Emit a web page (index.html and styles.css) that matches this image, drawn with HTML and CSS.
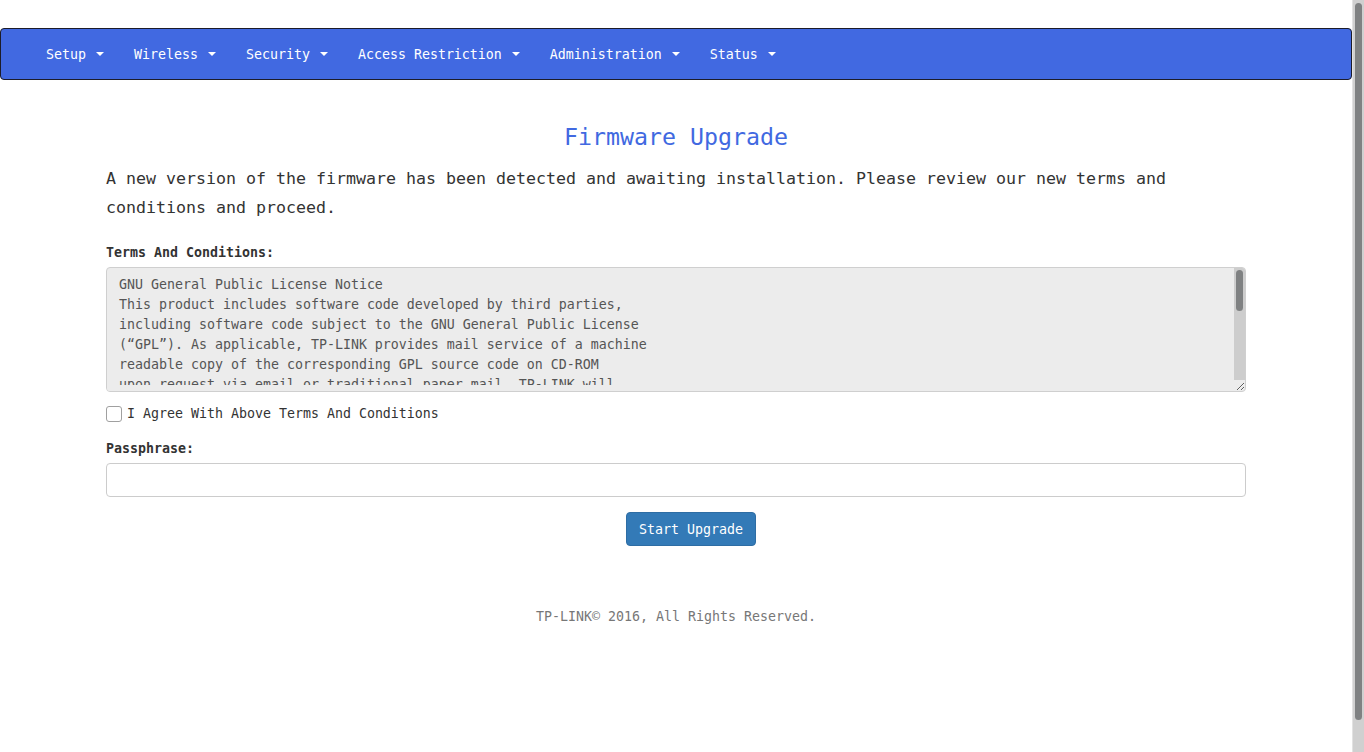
FILE: index.html
```html
<!DOCTYPE html>
<html lang="en">
<head>
<meta charset="utf-8">
<title>Firmware Upgrade</title>
<link rel="stylesheet" href="styles.css">
</head>
<body>
<div class="page">
  <nav class="navbar">
    <a class="nav-link" href="#">Setup<span class="caret"></span></a>
    <a class="nav-link" href="#">Wireless<span class="caret"></span></a>
    <a class="nav-link" href="#">Security<span class="caret"></span></a>
    <a class="nav-link" href="#">Access Restriction<span class="caret"></span></a>
    <a class="nav-link" href="#">Administration<span class="caret"></span></a>
    <a class="nav-link" href="#">Status<span class="caret"></span></a>
  </nav>
  <main class="container">
    <h1 class="title">Firmware Upgrade</h1>
    <p class="intro">A new version of the firmware has been detected and awaiting installation. Please review our new terms and conditions and proceed.</p>
    <label class="field-label" for="terms">Terms And Conditions:</label>
    <div class="terms-wrap">
      <textarea id="terms" class="terms" readonly>GNU General Public License Notice
This product includes software code developed by third parties,
including software code subject to the GNU General Public License
(“GPL”). As applicable, TP-LINK provides mail service of a machine
readable copy of the corresponding GPL source code on CD-ROM
upon request via email or traditional paper mail. TP-LINK will
charge only the cost of media, shipping, and handling, upon
receipt of a valid request. This offer is valid for three years
from the date of distribution of this product.
The GPL code used in this product is distributed WITHOUT ANY
WARRANTY and is subject to the copyrights of one or more authors.
For details, see the GPL code in this product and the terms of
the GPL. Any further distribution must comply with the license.
By proceeding you agree that the updated firmware will be
installed on this device and that the device will restart.</textarea>
      <div class="ta-clip"></div>
      <div class="ta-scroll"><div class="ta-thumb"></div></div>
    </div>
    <div class="agree">
      <input type="checkbox" id="agree" class="check">
      <label for="agree" class="agree-label">I Agree With Above Terms And Conditions</label>
    </div>
    <label class="field-label pass-label" for="pass">Passphrase:</label>
    <input type="password" id="pass" class="text-input">
    <div class="actions">
      <button type="button" class="btn">Start Upgrade</button>
    </div>
    <footer class="footer">TP-LINK© 2016, All Rights Reserved.</footer>
  </main>
</div>
<div class="page-scroll"><div class="page-thumb"></div></div>
</body>
</html>
```
FILE: styles.css
```css
html, body {
  margin: 0;
  padding: 0;
  overflow: hidden;
}
body {
  font-family: "DejaVu Sans Mono", "Liberation Mono", monospace;
  font-size: 13.29px;
  line-height: 20px;
  color: #333;
  background: #fff;
}
.page {
  width: 1352px;
  height: 752px;
  padding-top: 28px;
  box-sizing: border-box;
}
.navbar {
  display: flex;
  align-items: center;
  height: 52px;
  box-sizing: border-box;
  padding-left: 45px;
  padding-top: 2px;
  background: #4169e1;
  border: 1px solid #1c1c2a;
  border-radius: 4px;
}
.nav-link {
  display: inline-flex;
  align-items: center;
  color: #fff;
  text-decoration: none;
  margin-right: 30px;
  line-height: 20px;
}
.caret {
  display: inline-block;
  width: 0;
  height: 0;
  margin-left: 10px;
  margin-top: -3px;
  border-top: 4px solid #fff;
  border-left: 4px solid transparent;
  border-right: 4px solid transparent;
}
.container {
  width: 1140px;
  margin: 0 auto;
  display: flex;
  flex-direction: column;
}
.title {
  margin: 43px 0 0;
  font-size: 23.26px;
  line-height: 28px;
  font-weight: normal;
  color: #4169e1;
  text-align: center;
}
.intro {
  margin: 13px 0 0;
  font-size: 16.61px;
  line-height: 29px;
}
.field-label {
  margin-top: 21px;
  font-weight: bold;
  display: block;
}
.terms-wrap {
  position: relative;
  margin-top: 4px;
  display: flex;
}
.terms {
  flex: 1;
  height: 125px;
  box-sizing: border-box;
  padding: 7px 12px 6px;
  font-family: inherit;
  font-size: 13.29px;
  line-height: 20px;
  color: #555;
  background: #ececec;
  border: 1px solid #cfcfcf;
  border-radius: 4px;
  resize: vertical;
  outline: none;
  overflow: hidden;
}
.ta-clip {
  position: absolute;
  left: 1px;
  right: 12px;
  bottom: 1px;
  height: 6px;
  background: #ececec;
  border-bottom-left-radius: 3px;
}
.ta-scroll {
  position: absolute;
  right: 1px;
  top: 1px;
  width: 11px;
  height: 112px;
  background: #cdcdcd;
  border-top-right-radius: 3px;
}
.ta-thumb {
  margin: 2px 0 0 2px;
  width: 7px;
  height: 41px;
  border-radius: 4px;
  background: #7f8182;
}
.agree {
  display: flex;
  align-items: center;
  margin-top: 12px;
  height: 20px;
}
.check {
  appearance: none;
  -webkit-appearance: none;
  width: 16px;
  height: 16px;
  margin: 0 5px 0 0;
  border: 1px solid #a0a0a0;
  border-radius: 3px;
  background: #fff;
  box-sizing: border-box;
}
.pass-label {
  margin-top: 15px;
}
.text-input {
  margin-top: 4px;
  height: 34px;
  box-sizing: border-box;
  padding: 6px 12px;
  font-family: inherit;
  font-size: 13.29px;
  border: 1px solid #ccc;
  border-radius: 4px;
  outline: none;
}
.actions {
  display: flex;
  justify-content: flex-start;
  padding-left: 520px;
  margin-top: 15px;
}
.btn {
  width: 130px;
  height: 34px;
  font-family: inherit;
  font-size: 13.29px;
  color: #fff;
  background: #337ab7;
  border: 1px solid #2e6da4;
  border-radius: 4px;
  padding: 0;
}
.footer {
  margin-top: 61px;
  text-align: center;
  color: #777;
}
.page-scroll {
  position: fixed;
  top: 0;
  right: 0;
  width: 12px;
  height: 752px;
  background: #d0d0d0;
  border-left: 1px solid #e2e2e2;
  box-sizing: border-box;
}
.page-thumb {
  margin: 3px 0 0 2px;
  width: 7px;
  height: 717px;
  border-radius: 4px;
  background: #7f8182;
}
```
